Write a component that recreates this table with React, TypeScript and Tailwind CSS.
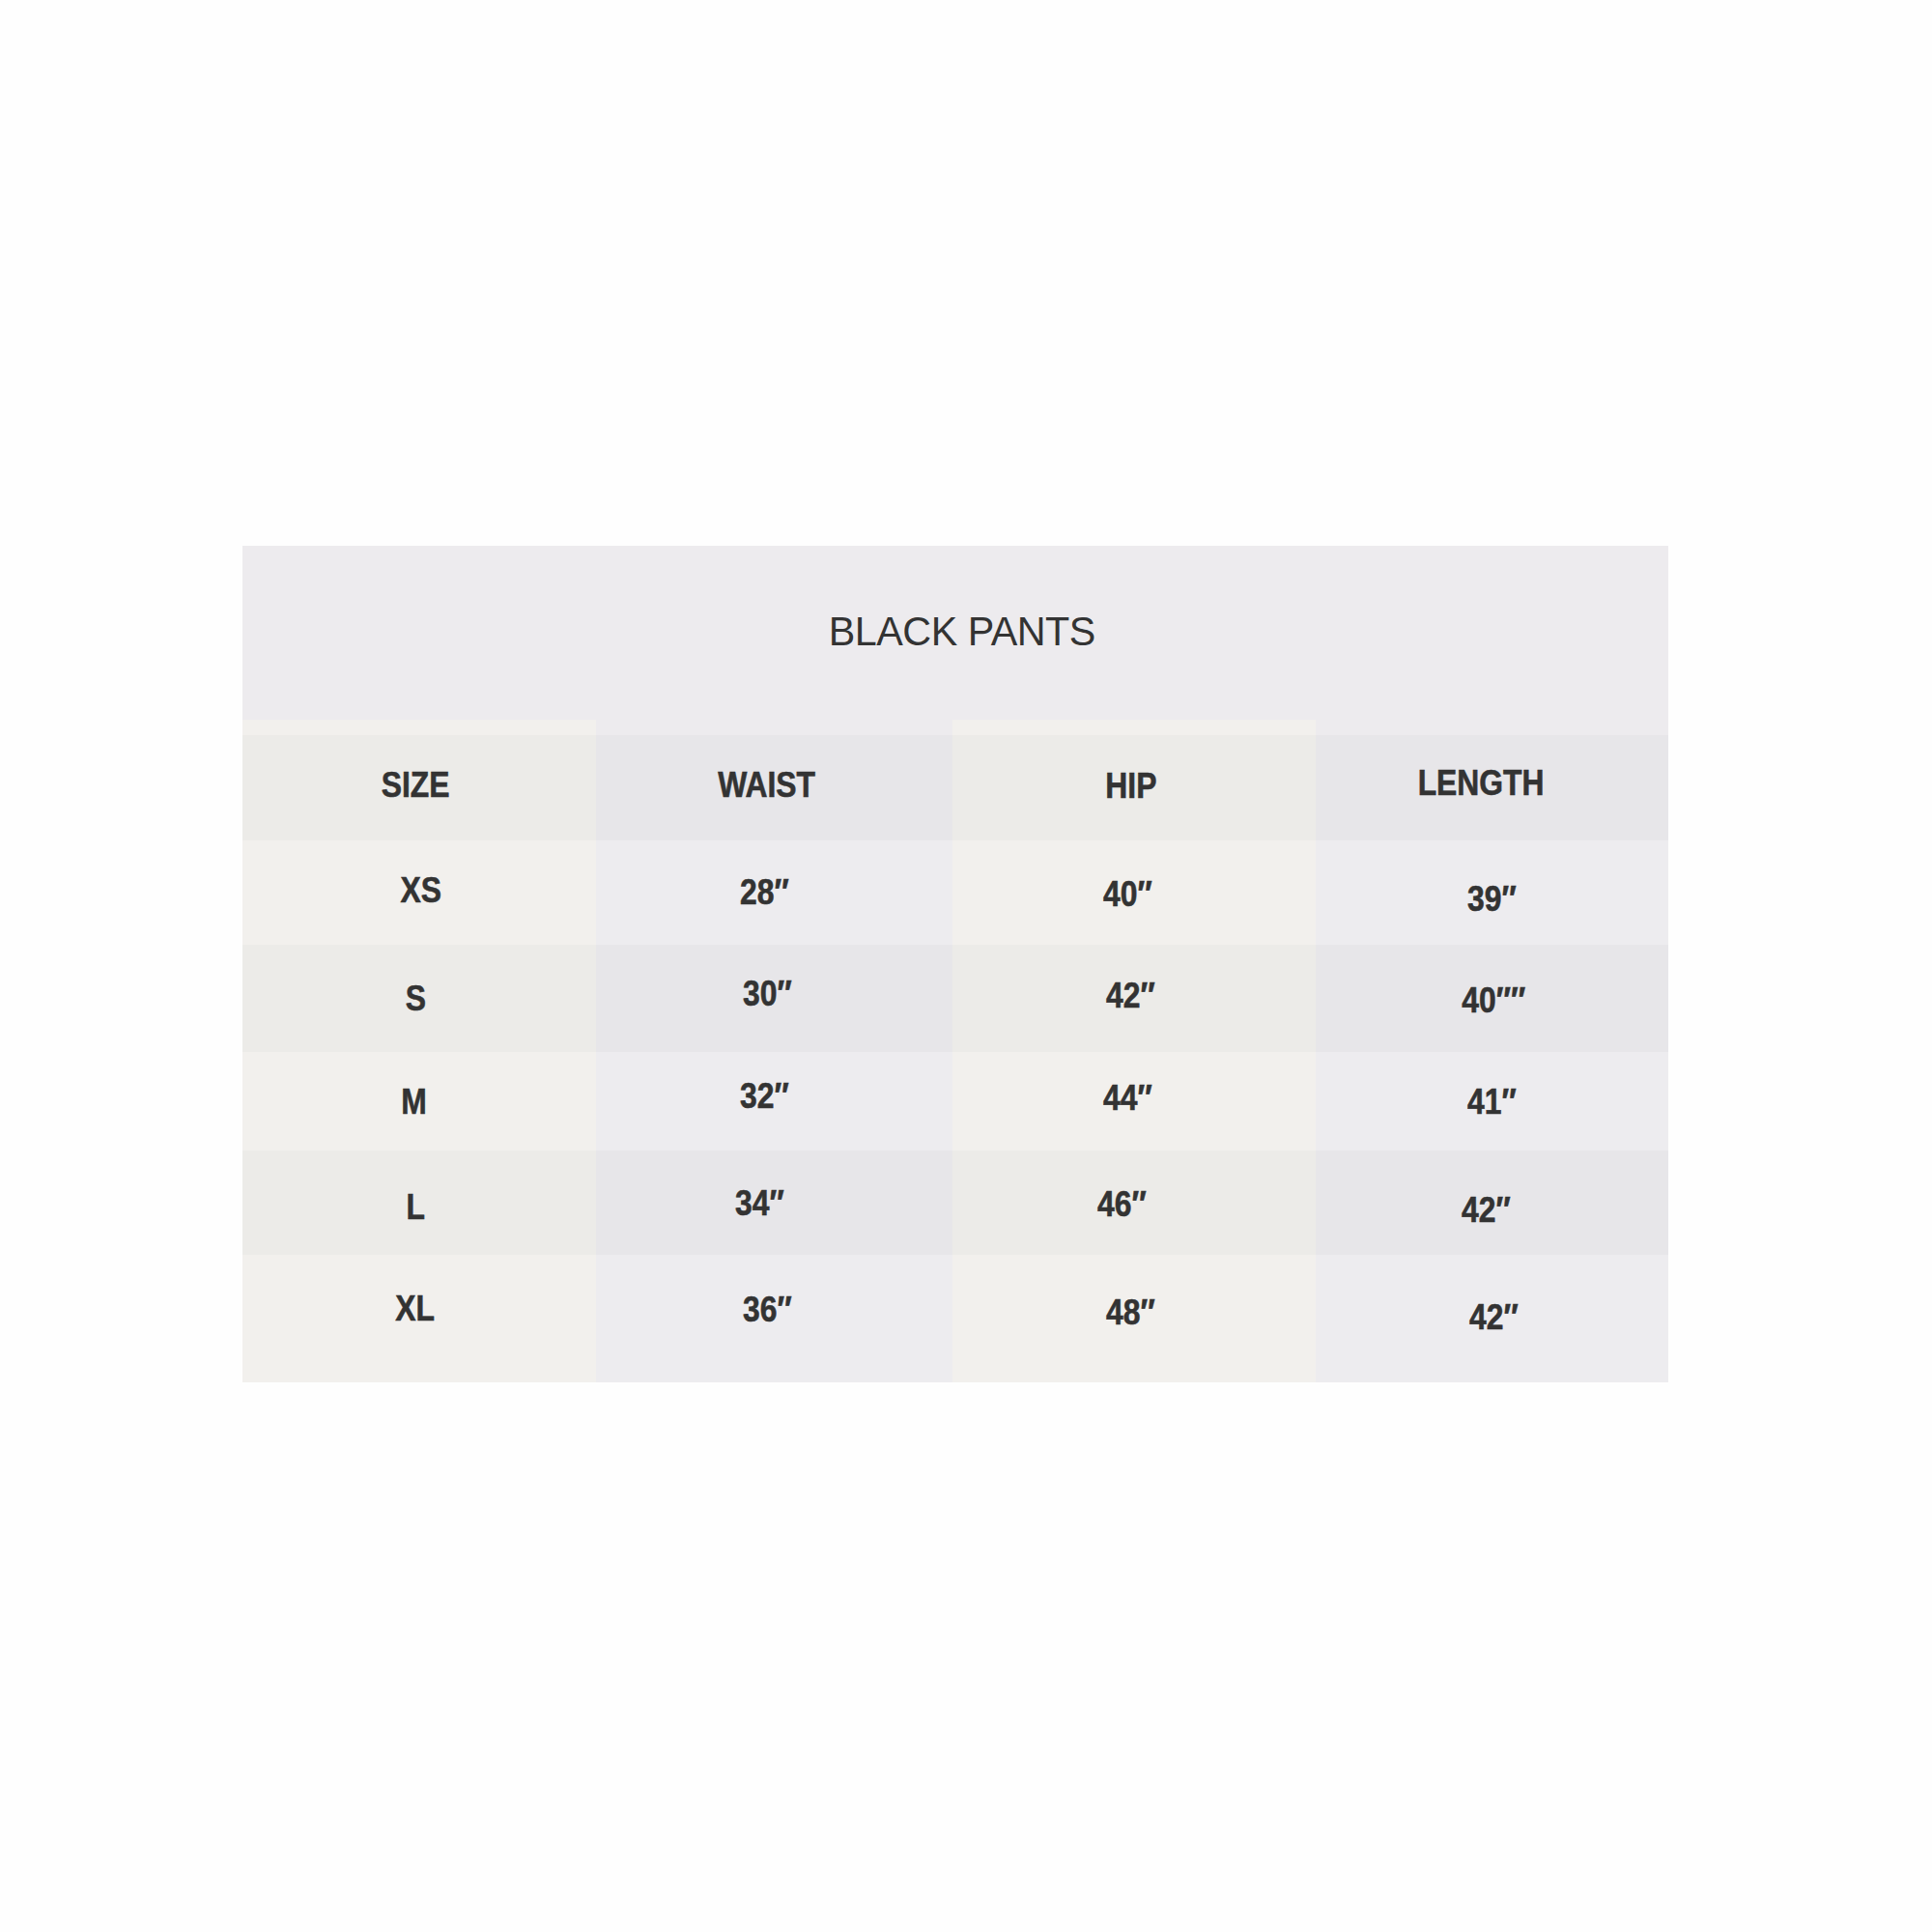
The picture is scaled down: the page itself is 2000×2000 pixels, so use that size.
import React from 'react';

// size chart for the black pants
const columns = ['SIZE', 'WAIST', 'HIP', 'LENGTH'];

const rows = [
  { h: 'h-[109px]', cells: ['SIZE', 'WAIST', 'HIP', 'LENGTH'], shift: ['-translate-x-[4px] -translate-y-[3px]', '-translate-x-[8px] -translate-y-[3px]', '-translate-x-[3px] -translate-y-[2px]', '-translate-x-[11px] -translate-y-[5px]'] },
  { h: 'h-[108px]', cells: ['XS', '28″', '40″', '39″'], shift: ['translate-x-[2px] -translate-y-[3px]', '-translate-x-[10px] -translate-y-[1px]', '-translate-x-[7px] translate-y-[1px]', 'translate-x-0 translate-y-[6px]'] },
  { h: 'h-[111px]', cells: ['S', '30″', '42″', '40″″'], shift: ['-translate-x-[4px]', '-translate-x-[7px] -translate-y-[5px]', '-translate-x-[4px] -translate-y-[3px]', 'translate-x-[2px] translate-y-[2px]'] },
  { h: 'h-[102px]', cells: ['M', '32″', '44″', '41″'], shift: ['-translate-x-[6px]', '-translate-x-[10px] -translate-y-[6px]', '-translate-x-[7px] -translate-y-[4px]', 'translate-x-0'] },
  { h: 'h-[108px]', cells: ['L', '34″', '46″', '42″'], shift: ['-translate-x-[4px] translate-y-[4px]', '-translate-x-[15px]', '-translate-x-[13px] translate-y-[1px]', '-translate-x-[6px] translate-y-[7px]'] },
  { h: 'h-[132px]', cells: ['XL', '36″', '48″', '42″'], shift: ['-translate-x-[4px] -translate-y-[11px]', '-translate-x-[7px] -translate-y-[10px]', '-translate-x-[4px] -translate-y-[7px]', 'translate-x-[2px] -translate-y-[2px]'] },
];

const cellBg = (r: number, c: number) => {
  const dark = r % 2 === 0;
  if (c % 2 === 0) return dark ? 'bg-[#ecebe8]' : 'bg-[#f2f0ed]';
  return dark ? 'bg-[#e7e6e9]' : 'bg-[#edecef]';
};

export default function App() {
  return (
    <div className="w-[2000px] h-[2000px] bg-[#fefefe] pt-[565px] pl-[251px] font-['Liberation_Sans',Arial,sans-serif] text-[#333333]">
      <div className="w-[1476px]">
        {/* Title */}
        <div className="h-[180px] bg-[#edebee] flex items-center justify-center">
          <span className="inline-block text-[43px] leading-none tracking-[-0.5px] scale-x-[0.96] translate-x-[7px] -translate-y-[2px]">BLACK PANTS</span>
        </div>

        {/* Thin strip above header */}
        <div className="grid grid-cols-[366px_369px_376px_365px] h-[16px]">
          {columns.map((c, i) => (
            <div key={c} className={i % 2 === 0 ? 'bg-[#f2f0ed]' : 'bg-[#edebee]'} />
          ))}
        </div>

        {/* Table body */}
        <div className="grid grid-cols-[366px_369px_376px_365px]">
          {rows.map((row, r) =>
            row.cells.map((text, c) => (
              <div
                key={`${r}-${c}`}
                className={`${row.h} ${cellBg(r, c)} flex items-center justify-center`}
              >
                <span className={`inline-block text-[37px] font-bold leading-none scale-x-[0.86] [-webkit-text-stroke:0.6px_#333333] ${row.shift[c]}`}>
                  {text}
                </span>
              </div>
            ))
          )}
        </div>
      </div>
    </div>
  );
}
